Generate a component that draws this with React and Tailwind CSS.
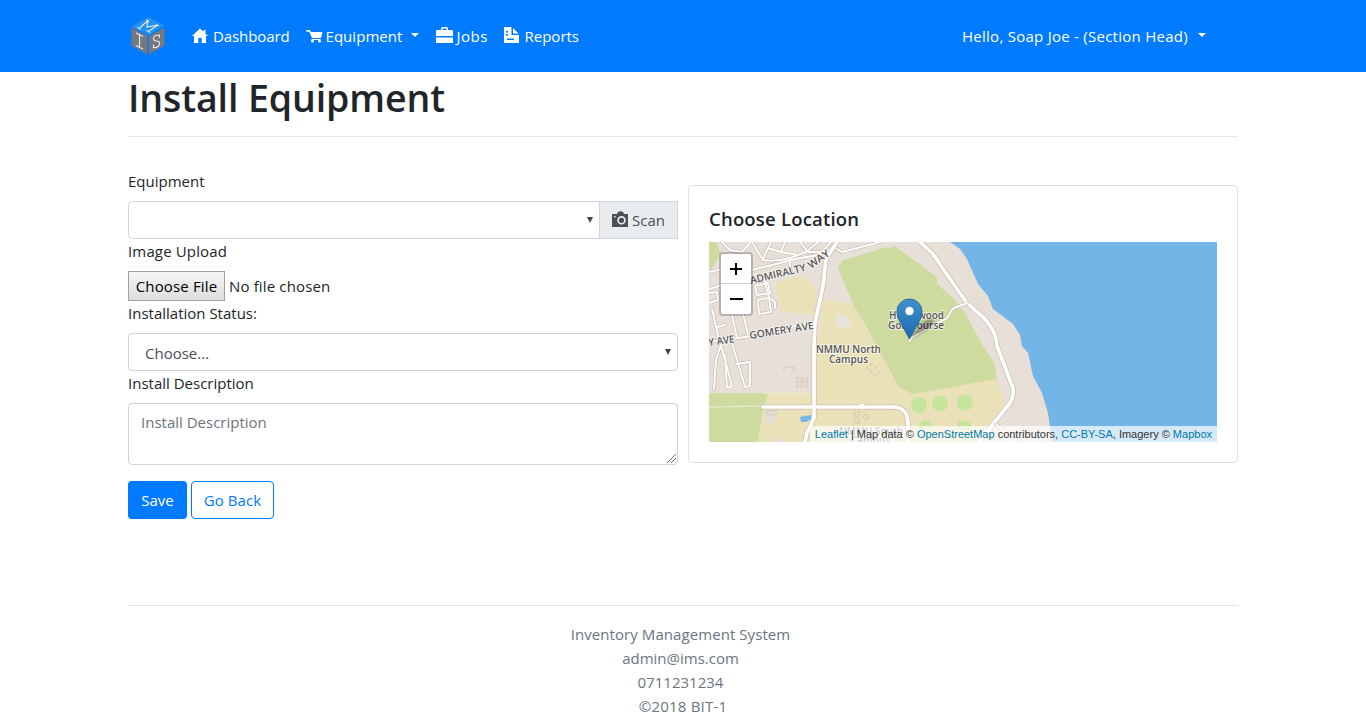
import React from "react";

function Casing({ roads, width = 5 }) {
  return (
    <g fill="none" strokeLinecap="round" strokeLinejoin="round">
      {roads.map((d) => <path key={"c" + d} d={d} stroke="#c6bdb0" strokeWidth={width + 1.4} />)}
      {roads.map((d) => <path key={d} d={d} stroke="#fff" strokeWidth={width} />)}
    </g>
  );
}

const minorRoads = [
  "M709 272L722 269",
  "M709 289L722 285",
  "M722 242L730 250L742 252L750 243",
  "M752 270L800 258Q822 256 834 246",
  "M752 242L763 260Q776 262 790 258L806 252L818 242",
  "M771 242L763 259M768 248L781 252L785 242M781 252L798 255",
  "M800 242L808 252L822 252L831 242M790 258V268",
  "M832 246L842 252L880 242",
  "M709 342L745 337L814 322",
  "M712 309L719 340M732 315L737 338M743 314L748 334M717 327L725 325",
  "M709 293L717 292L718 300L709 303",
  "M755 286L768 283L770 293L757 295Z",
  "M758 300L769 298L771 312L759 314Z",
  "M764 279L769 297L775 302V308",
  "M714 389L716 360L721 345L732 386L727 388L725 355",
  "M732 343L745 387L750 386V362L736 364",
];

function MapCanvas() {
  return (
    <svg className="block h-[200px] w-[508px]" viewBox="709 242 508 200">
      <defs>
        <linearGradient id="pin" x1="0" y1="0" x2="0" y2="1">
          <stop offset="0" stopColor="#3f91cf" />
          <stop offset="1" stopColor="#1d69ae" />
        </linearGradient>
        <filter id="soft"><feGaussianBlur stdDeviation="1.5" /></filter>
      </defs>
      <rect x="709" y="242" width="508" height="200" fill="#e8dfd8" />
      <path d="M709 242H716L721 254L709 272Z" fill="#cddb9e" />
      <path d="M775 283L800 276L812 283L817 291L815 316L780 311Z" fill="#ebe1b8" />
      <path d="M822 299L853 304L898 386L997 379L1005 403L978 442H758L768 393H814Z" fill="#ebe1b8" />
      <path d="M709 393H768L762 415L758 442H709Z" fill="#cddb9e" />
      <path d="M838 268L842 261L870 252L886 247L888 249L895 246L906 255L920 264L937 278L937 284L953 298L965 313L983 346L994 362L997 379L912 394L898 386L868 329L853 304Z" fill="#cddb9e" />
      <path d="M940 242L965 266L977 292L992 315L1014 335L1022 370L1040 410L1045 442" fill="none" stroke="#e9dfc4" />
      <path d="M950 242L960 249L967 259L978 284L988 296L993 309L1013 324L1020 335L1022 346L1028 353L1033 376L1042 393L1048 413L1052 442H1217V242Z" fill="#73b5e6" />
      <path d="M837 314L846 315L852 327L837 327Z" fill="#e7e4de" />
      <g fill="#e4ddd5">
        <path d="M766 410H777V423H766ZM775 439H784V442H775Z" />
        <path d="M970 298L975 295L989 315L985 319Z" />
      </g>
      <g fill="none" stroke="#d6ccb8" strokeWidth="1.2">
        <path d="M784 371V367H794V371M797 378H807V387H797ZM797 382H807M802 378V387" />
        <path d="M767 411H776V415H767Z" />
        <circle cx="857" cy="414" r="2.5" /><circle cx="866" cy="417" r="2.5" /><circle cx="857" cy="421" r="2.5" />
      </g>
      <g fill="#ddd1b5">
        {[[870,363],[866,367],[874,366],[870,370],[877,371],[874,374]].map(([x, y]) => (
          <rect key={x + "-" + y} x={x} y={y} width="2.6" height="2.6" />
        ))}
      </g>
      <g fill="#c5e59d">
        <circle cx="919" cy="405" r="8" /><circle cx="940" cy="403.500" r="8" /><circle cx="965" cy="402.500" r="8" />
        <path d="M920 423L924 420L931 421V429H919ZM957 428L958 422L964 420L971 423V430H957Z" />
      </g>
      <path d="M800 417L805 416L811 415V419L806 422H801Z" fill="#73b5e6" />
      <Casing roads={minorRoads} width={1.9} />
      <path d="M709 407L763 406M764 393H814" fill="none" stroke="#e6e8ca" strokeWidth="1.3" />
      <Casing
        width={3.7}
        roads={[
          "M837 242L826 259L823 286L815 323L814 346V418L807 433L805 442",
          "M763 407H893Q908 407 908 424V442",
          "M920 242L933 254L950 279L967 303L985 319Q997 333 997 346L1013 388Q1014 398 1009 404L979 442",
        ]}
      />
      <Casing width={2} roads={["M967 303L954 308Q951 310 949 315T939 322L911 338L910 341", "M996 424L1015 442"]} />
      <circle cx="862" cy="406.500" r="2.8" fill="#fff" />
      <g className="[font-family:'Open_Sans',sans-serif] font-semibold" fill="#555456" stroke="#fff" strokeOpacity=".7" strokeWidth="1.8" paintOrder="stroke" strokeLinejoin="round" fontSize="10.300">
        <text transform="translate(751 284) rotate(-13.500)" textLength="57" lengthAdjust="spacingAndGlyphs">ADMIRALTY</text>
        <text transform="translate(811 269) rotate(-36)" textLength="24" lengthAdjust="spacingAndGlyphs">WAY</text>
        <text transform="translate(750 339) rotate(-9)" textLength="65" lengthAdjust="spacingAndGlyphs">GOMERY AVE</text>
        <text transform="translate(709 346) rotate(-8)" textLength="26" lengthAdjust="spacingAndGlyphs">Y AVE</text>
        <text x="816" y="353" textLength="65" lengthAdjust="spacingAndGlyphs">NMMU North</text>
        <text x="829" y="362.500" textLength="39" lengthAdjust="spacingAndGlyphs">Campus</text>
        <text x="889" y="319" textLength="55" lengthAdjust="spacingAndGlyphs">Humewood</text>
        <text x="888" y="328.500" textLength="56" lengthAdjust="spacingAndGlyphs">Golf Course</text>
        <text x="839" y="435" textLength="64" lengthAdjust="spacingAndGlyphs">NMMU South</text>
        <text x="851" y="444" textLength="39" lengthAdjust="spacingAndGlyphs">Campus</text>
      </g>
      <path d="M909 338L924 321Q934 317 934 322Q930 330 909 338Z" fill="#000" opacity=".35" filter="url(#soft)" />
      <path d="M909.500 339L898.500 319Q897 316 897 311.500A12.500 12.500 0 0 1 922 311.500Q922 316 920.500 319Z" fill="url(#pin)" stroke="#2e6c97" />
      <circle cx="909.500" cy="311" r="4.500" fill="#fff" stroke="#2d76ad" strokeWidth=".6" />
    </svg>
  );
}

function Logo() {
  return (
    <svg className="h-[40px] w-[36px]" viewBox="0 0 36 40">
      <path d="M18 1L34.500 9.500L18.500 19L1.500 10.500Z" fill="#2292ee" />
      <path d="M1.500 11.500L17.500 20V38.500L1.500 29.500Z" fill="#77787e" />
      <path d="M19 20L34.500 11.500V29.500L19 38.500Z" fill="#77787e" />
      <g fill="none" stroke="#e5edf3" strokeWidth="1.100">
        <path d="M9 12.500L18 4.500M7.500 11.500L11 13.500M16.500 4L19 5M18 4.500L17 11L27.500 9M27.500 9L18.500 15.500M26 8.500L29 10M16.500 14.500L20.500 16.500" />
        <path d="M6 17L13 20.500M9.500 18.800V31.500M6 29.500L13 33" />
        <path d="M29.500 22V19Q23.500 19 23.500 22.500Q23.500 25 26.500 25Q30 25 29.500 28Q28 32.500 23.500 31.500V28.500" />
      </g>
    </svg>
  );
}

const Caret = ({ className = "" }) => (
  <span className={"inline-block border-x-[4.8px] border-t-[4.8px] border-x-transparent border-t-current " + className} />
);

export default function App() {
  return (
    <div className="h-[718px] w-[1366px] overflow-hidden bg-white text-[15px] leading-6 text-[#212529] [font-family:'Open_Sans',sans-serif]">
      <nav className="flex h-[72px] items-center bg-[#007bff] pl-[130px] text-white">
        <Logo />
        <a className="ml-[26px] flex w-[113.500px] items-center">
          <svg className="mr-[5px] h-4 w-4" viewBox="0 0 16 16" fill="#fff"><path d="M8 .5L0 8H2V15H6.300V10H9.700V15H14V8H16L13.500 5.700V2H11.500V3.800Z" /></svg>
          <span className="tracking-[-.1px]">Dashboard</span>
        </a>
        <a className="flex w-[130px] items-center">
          <svg className="mr-[3px] h-4 w-[17px]" viewBox="0 0 17 16" fill="#fff"><path d="M0 2H4L5 4H16.500L15 10H6L3.300 3.800H.5ZM5.500 11H14.500V12H5.500Z" /><circle cx="6.500" cy="13" r="1.500" /><circle cx="13.500" cy="13" r="1.500" /></svg>
          <span className="tracking-[.05px]">Equipment</span>
          <Caret className="ml-[9px] -mt-[2px]" />
        </a>
        <a className="flex w-[68px] items-center">
          <svg className="mr-1 h-[18px] w-[17px] -mt-[2px]" viewBox="0 0 17 18" fill="#fff"><path fillRule="evenodd" d="M5 4V2L6 1H11L12 2V4H16Q17 4 17 5V10H0V5Q0 4 1 4ZM6.500 4H10.500V2.500H6.500ZM0 11.500H17V17H0Z" /></svg>
          <span className="tracking-[.5px]">Jobs</span>
        </a>
        <a className="flex items-center">
          <svg className="mr-[5px] h-4 w-4 -mt-[2px]" viewBox="0 0 16 16" fill="#fff"><path fillRule="evenodd" d="M0 0H7.500V8H15V16H0ZM2 4V5.500H4V4ZM2 7V8.500H4V7ZM3 11.500V13H10V11.500ZM9 1L14.500 6.500H9Z" /></svg>
          <span>Reports</span>
        </a>
        <a className="ml-auto mr-[160px] flex w-[244px] items-center justify-between whitespace-nowrap">
          <span className="tracking-[.26px]">Hello, Soap Joe - (Section Head)</span>
          <Caret className="-mt-[2px]" />
        </a>
      </nav>

      <main className="mx-[128px] h-[533px]">
        <h1 className="h-[65px] border-b border-[#e5e5e5] pt-[2px] text-[37.500px] font-semibold leading-[48px] tracking-[-.1px]">Install Equipment</h1>
        <div className="flex items-start gap-[10px] pt-8">
          <form className="w-[550px]">
            <label className="block h-8">Equipment</label>
            <div className="flex h-[38px]">
              <div className="flex w-[472px] items-center justify-end rounded-l border border-[#ced4da] pr-[6px]">
                <span className="border-x-[3.500px] border-t-[6px] border-x-transparent border-t-[#444]" />
              </div>
              <div className="flex w-[78px] items-center border border-l-0 border-[#ced4da] bg-[#e9ecef] pl-3 text-[#495057]">
                <svg className="-mt-[2px] mr-1 h-4 w-4" viewBox="0 0 16 16" fill="#495057"><path fillRule="evenodd" d="M0 3H5L6 1Q8.500-.5 11 1L12 3H16V16H0ZM9.500 5A4.300 4.300 0 1 0 9.500 13.600A4.300 4.300 0 0 0 9.500 5ZM9.500 6.700A2.600 2.600 0 1 1 9.500 11.900A2.600 2.600 0 0 1 9.500 6.700ZM2 5V6.500H3.500V5Z" /></svg>
                <span>Scan</span>
              </div>
            </div>
            <label className="block h-8 tracking-[.15px]">Image Upload</label>
            <div className="flex h-[30px] items-center">
              <button type="button" className="h-[30px] w-[97px] whitespace-nowrap border border-[#a0a0a0] bg-linear-to-b from-[#f6f6f6] to-[#dddddd] text-center tracking-[.15px] text-black">Choose File</button>
              <span className="ml-[4px] tracking-[.15px]">No file chosen</span>
            </div>
            <label className="block h-8">Installation Status:</label>
            <div className="flex h-[38px] items-center justify-between rounded border border-[#ced4da] pl-4 pr-[6px] text-[#495057]">
              <span className="pt-[2px]">Choose...</span>
              <span className="border-x-[3.500px] border-t-[6px] border-x-transparent border-t-[#444]" />
            </div>
            <label className="block h-8">Install Description</label>
            <div className="flex h-[62px] justify-between rounded border border-[#ced4da] pl-3 pt-[6px] text-[#6c757d]">
              <span>Install Description</span>
              <svg className="mb-px mr-px h-[9px] w-[9px] self-end" viewBox="0 0 9 9"><path d="M0 9L9 0M4 9L9 4" stroke="#555" strokeWidth=".9" /></svg>
            </div>
            <div className="mt-4 flex gap-1">
              <button type="button" className="h-[38px] w-[59px] rounded bg-[#007bff] text-white">Save</button>
              <button type="button" className="h-[38px] w-[83px] whitespace-nowrap rounded border border-[#007bff] tracking-[.1px] text-[#007bff]">Go Back</button>
            </div>
          </form>
          <section className="mt-4 h-[278px] w-[550px] rounded border border-[#dfdfdf] px-5 pt-[21px]">
            <h5 className="mb-[11px] text-[18.500px] font-semibold leading-6 tracking-[.2px]">Choose Location</h5>
            <div className="relative h-[200px] w-[508px] overflow-hidden">
              <MapCanvas />
              <div className="absolute left-[10px] top-[10px] h-[64px] w-[34px] rounded border-2 border-black/20 bg-clip-padding">
                <div className="flex h-[30px] items-center justify-center rounded-t-xs border-b border-[#ccc] bg-white">
                  <svg className="h-3 w-3" viewBox="0 0 12 12"><path d="M0 6H12M6 0V12" stroke="#000" strokeWidth="2" /></svg>
                </div>
                <div className="flex h-[30px] items-center justify-center rounded-b-xs bg-white">
                  <svg className="ml-px h-3 w-[13px]" viewBox="0 0 13 12"><path d="M0 6H13" stroke="#000" strokeWidth="2" /></svg>
                </div>
              </div>
              <div className="absolute bottom-0 right-0 whitespace-nowrap bg-white/70 px-[5px] text-[11px] leading-4 text-[#333] [font-family:'Liberation_Sans',sans-serif]">
                <span className="text-[#0078a8]">Leaflet</span> | Map data © <span className="text-[#0078a8]">OpenStreetMap</span> contributors, <span className="text-[#0078a8]">CC-BY-SA</span>, Imagery © <span className="text-[#0078a8]">Mapbox</span>
              </div>
            </div>
          </section>
        </div>
      </main>

      <footer className="mx-[128px] border-t border-[#e5e5e5] pt-[16px] text-center text-[#6c757d]">
        <p className="pr-[5px] tracking-[.07px]">Inventory Management System</p>
        <p className="pr-[5px]">admin@ims.com</p>
        <p className="pr-[5px]">0711231234</p>
        <p className="tracking-[.2px]">©2018 BIT-1</p>
      </footer>
    </div>
  );
}
